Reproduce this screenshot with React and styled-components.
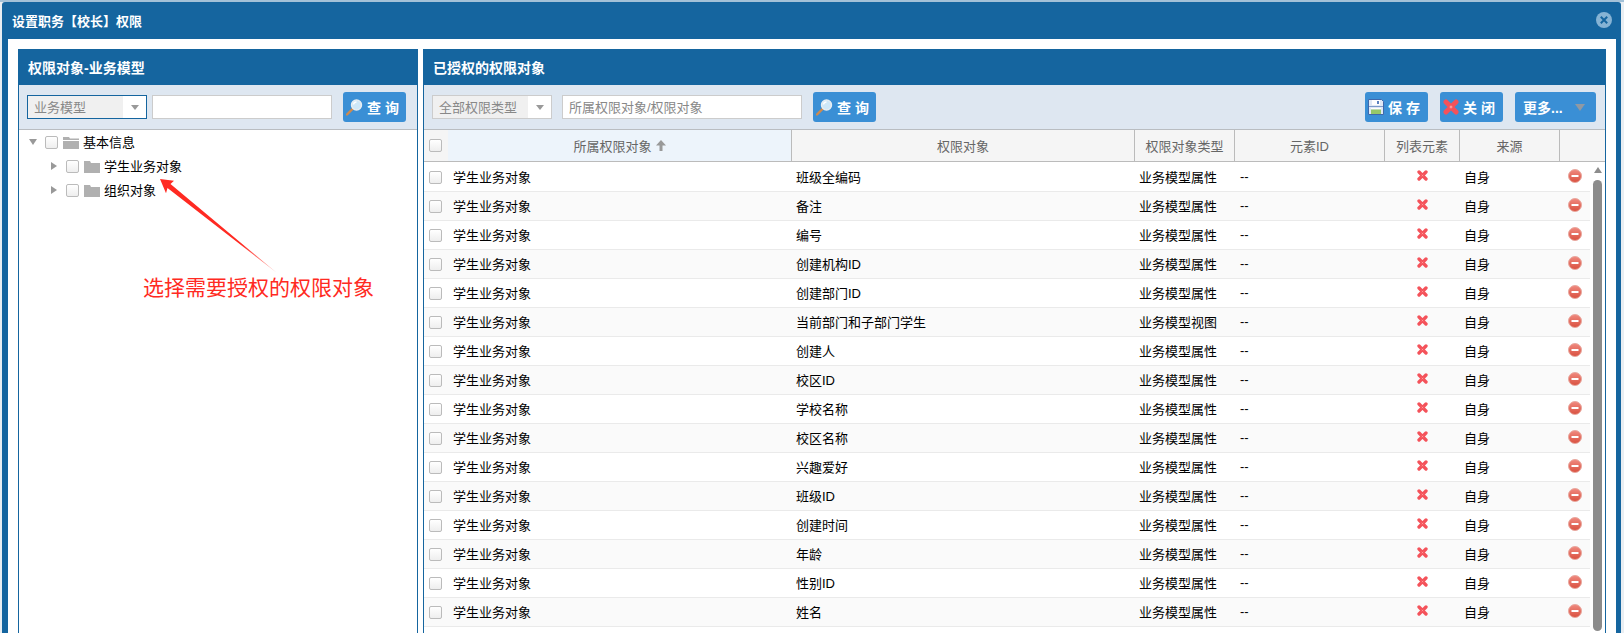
import React from 'react'
import styled, { createGlobalStyle } from 'styled-components'

const GlobalStyle = createGlobalStyle`
  html, body {
    margin: 0;
    padding: 0;
    height: 633px;
    overflow: hidden;
    background: #e9eef2;
  }
  body {
    font-family: "Liberation Sans", "Noto Sans CJK SC", sans-serif;
    font-size: 13px;
    color: #000;
  }
  * { box-sizing: border-box; }
`

const Page = styled.div`
  height: 633px;
  padding: 2px 3px 0 2px;
  background: linear-gradient(#a3c1d8 0, #a3c1d8 2px, #e9eef2 2px);
  overflow: hidden;
`

const Dialog = styled.div`
  height: 631px;
  display: flex;
  flex-direction: column;
  background: #15659f;
  border-radius: 3px 3px 0 0;
  padding: 0 5px 0 6px;
`

const DialogTitle = styled.div`
  height: 37px;
  flex: none;
  display: flex;
  align-items: center;
  padding-left: 4px;
  color: #fff;
  font-weight: bold;
  position: relative;
`

const CloseWrap = styled.span`
  position: absolute;
  right: 4px;
  top: 10px;
  width: 16px;
  height: 16px;
  display: block;
`

const DialogBody = styled.div`
  flex: 1;
  min-height: 0;
  background: #fff;
  padding: 10px 10px 0;
  display: flex;
  gap: 5px;
  position: relative;
`

const Panel = styled.section`
  width: ${(props) => props.$width || 'auto'};
  flex: ${(props) => (props.$width ? 'none' : '1')};
  min-width: 0;
  display: flex;
  flex-direction: column;
  border: 1px solid #15659f;
  border-bottom: 0;
`

const PanelHeader = styled.div`
  height: 36px;
  flex: none;
  margin-top: -1px;
  padding: 0 0 0 9px;
  display: flex;
  align-items: center;
  background: #15659f;
  color: #fff;
  font-size: 14px;
  font-weight: bold;
`

const Toolbar = styled.div`
  height: 45px;
  flex: none;
  display: flex;
  align-items: center;
  padding: 0 9px 0 8px;
  background: #dee7f1;
  border-bottom: 1px solid #b9bdc1;
`

const SelectBox = styled.div`
  width: 120px;
  height: 24px;
  flex: none;
  display: flex;
  background: #fff;
  border: 1px solid ${(props) => (props.$focused ? '#15659f' : '#ccc')};
  color: #888;
`

const SelectText = styled.div`
  flex: 1;
  background: #f0f0f0;
  padding-left: 6px;
  line-height: 23px;
  white-space: nowrap;
`

const SelectArrow = styled.div`
  width: 23px;
  display: flex;
  align-items: center;
  justify-content: center;
  &::after {
    content: '';
    border-left: 4.5px solid transparent;
    border-right: 4.5px solid transparent;
    border-top: 5px solid #999;
  }
`

const SearchInput = styled.input`
  width: ${(props) => props.$width}px;
  height: 24px;
  flex: none;
  margin-left: ${(props) => props.$gap}px;
  padding: 0 6px;
  border: 1px solid #ccc;
  background: #fff;
  outline: none;
  font: inherit;
  color: #333;
  &::placeholder { color: #888; opacity: 1; }
`

const Button = styled.button`
  width: ${(props) => props.$width || 63}px;
  height: 30px;
  flex: none;
  margin-left: ${(props) => props.$gap || 0}px;
  padding: 0 0 0 3px;
  display: flex;
  align-items: center;
  gap: 4px;
  border: 0;
  border-radius: 3px;
  background: #3a8fd5;
  color: #fff;
  font: inherit;
  font-size: 14px;
  font-weight: bold;
  white-space: pre;
`

const MoreButton = styled(Button)`
  padding: 0 11px 0 8px;
  justify-content: space-between;
  &::after {
    content: '';
    border-left: 5px solid transparent;
    border-right: 5px solid transparent;
    border-top: 7px solid #8f99a3;
  }
`

const Spacer = styled.div`
  flex: 1;
`

const Tree = styled.ul`
  list-style: none;
  margin: 0;
  padding: 0;
`

const TreeRow = styled.li`
  height: 24px;
  display: flex;
  align-items: center;
  padding-left: ${(props) => (props.$child ? 32 : 10)}px;
`

const TreeLabel = styled.span`
  margin-top: -2px;
`

const Caret = styled.span`
  width: 0;
  height: 0;
  flex: none;
  margin-right: ${(props) => (props.$open ? 8 : 9)}px;
  ${(props) =>
    props.$open
      ? `border-left: 4.5px solid transparent;
         border-right: 4.5px solid transparent;
         border-top: 6px solid #999;`
      : `border-top: 4.5px solid transparent;
         border-bottom: 4.5px solid transparent;
         border-left: 6px solid #999;`}
`

const Check = styled.span`
  width: 13px;
  height: 13px;
  flex: none;
  display: block;
  border: 1px solid #bbb;
  border-radius: 2px;
  background: linear-gradient(#fff, #eee);
`

const FolderWrap = styled.span`
  width: 16px;
  height: 13px;
  flex: none;
  margin: 0 4px 0 5px;
  display: block;
`

const Grid = styled.div`
  display: flex;
  flex-direction: column;
  flex: 1;
  min-height: 0;
`

const HeadRow = styled.div`
  height: 32px;
  flex: none;
  display: grid;
  grid-template-columns: 24px 344px 343px 100px 150px 75px 100px 45px;
  background: #f5f5f5;
  border-bottom: 1px solid #bbb;
`

const HeadCell = styled.div`
  display: flex;
  align-items: center;
  justify-content: center;
  gap: 4px;
  color: #666;
  background: ${(props) => (props.$sorted ? '#edf4fb' : 'transparent')};
  border-right: ${(props) => (props.$last ? '0' : '1px solid #bbb')};
`

const CheckCell = styled.div`
  display: flex;
  align-items: center;
  padding-left: 5px;
`

const BodyWrap = styled.div`
  flex: 1;
  min-height: 0;
  display: flex;
  padding-top: 1px;
`

const Rows = styled.div`
  width: 1166px;
  flex: none;
`

const Row = styled.div`
  height: 29px;
  display: grid;
  grid-template-columns: 24px 343px 343px 100px 150px 75px 100px 31px;
  align-items: center;
  background: ${(props) => (props.$odd ? '#fafafa' : '#fff')};
  border-bottom: 1px solid #eaeaea;
`

const Cell = styled.div`
  padding-left: ${(props) => props.$pad ?? 5}px;
  margin-top: -2px;
  white-space: nowrap;
`

const IconCell = styled.div`
  display: flex;
  justify-content: center;
  padding-left: 2px;
  margin-top: -3px;
`

const MinusCell = styled(IconCell)`
  justify-content: flex-start;
  padding-left: 9px;
`

const ScrollTrack = styled.div`
  width: 15px;
  flex: none;
  padding: 4px 3px 0;
  display: flex;
  flex-direction: column;
  align-items: center;
`

const ScrollUp = styled.div`
  flex: none;
  border-left: 4.5px solid transparent;
  border-right: 4.5px solid transparent;
  border-bottom: 6px solid #8c8c8c;
`

const ScrollThumb = styled.div`
  width: 9px;
  height: 451px;
  flex: none;
  margin-top: 7px;
  background: #8c8c8c;
  border-radius: 5px;
`

const ArrowMark = styled.svg`
  position: absolute;
  left: 150px;
  top: 130px;
  width: 140px;
  height: 120px;
  pointer-events: none;
`

const Annotation = styled.div`
  position: absolute;
  left: 135px;
  top: 234px;
  font-size: 21px;
  line-height: 30px;
  color: #ff2a22;
  white-space: nowrap;
`

const Magnifier = () => (
  <svg width="17" height="17" viewBox="0 0 17 17">
    <path d="M1 15.5 L7 9.5" stroke="#d08a4c" strokeWidth="2.4" strokeLinecap="round" />
    <circle cx="10.5" cy="6" r="5" fill="#cfe8f8" stroke="#e8eef2" strokeWidth="1.4" />
    <path d="M7.5 5.5a3 3 0 0 1 3-2.5" stroke="#fff" strokeWidth="1.4" fill="none" />
  </svg>
)

const Floppy = () => (
  <svg width="16" height="16" viewBox="0 0 16 16">
    <path d="M0.5 0.5h13l2 2v13h-15z" fill="#dfe8f5" stroke="#3f68ab" />
    <rect x="4" y="1" width="8" height="5" fill="#fff" />
    <rect x="9" y="2" width="2" height="3" fill="#5b82c0" />
    <rect x="1" y="7" width="14" height="1" fill="#7d9bcb" />
    <rect x="3" y="9" width="10" height="1.5" fill="#fff" />
    <rect x="3" y="10.5" width="10" height="4.5" fill="#96c868" />
  </svg>
)

const Cross = ({ size = 13 }) => (
  <svg width={size} height={size} viewBox="0 0 13 13">
    <path d="M2.4 2.4 L10.6 10.6 M10.6 2.4 L2.4 10.6" stroke="#f4525a" strokeWidth="4" strokeLinecap="round" />
    <path d="M5.6 5.6 L7.4 7.4 M7.4 5.6 L5.6 7.4" stroke="#ff9a9a" strokeWidth="1" />
  </svg>
)

const MinusIcon = () => (
  <svg width="14" height="14" viewBox="0 0 14 14">
    <defs>
      <linearGradient id="minusFill" x1="0" y1="0" x2="0" y2="1">
        <stop offset="0" stopColor="#f08a80" />
        <stop offset="1" stopColor="#d9503f" />
      </linearGradient>
    </defs>
    <circle cx="7" cy="7" r="6.5" fill="url(#minusFill)" stroke="#e8a89f" />
    <rect x="3.5" y="6" width="7" height="2" fill="#fff" />
  </svg>
)

const DialogClose = () => (
  <CloseWrap>
    <svg width="16" height="16" viewBox="0 0 16 16">
      <circle cx="8" cy="8" r="8" fill="#86b3d4" />
      <path d="M4.8 4.8 L11.2 11.2 M11.2 4.8 L4.8 11.2" stroke="#15659f" strokeWidth="2" />
    </svg>
  </CloseWrap>
)

const Folder = ({ open }) => (
  <FolderWrap>
    <svg width="16" height="13" viewBox="0 0 16 13">
      {open ? (
        <>
          <path d="M0 1h6l1 1.5h9V4H0z" fill="#b0b0b0" />
          <path d="M0 5h16v8H0z" fill="#b0b0b0" />
        </>
      ) : (
        <path d="M0 1h6l1 2h9v10H0z" fill="#b0b0b0" />
      )}
    </svg>
  </FolderWrap>
)

const SortUp = () => (
  <svg width="10" height="11" viewBox="0 0 10 11">
    <path d="M5 0 L10 5.5 H6.5 V11 H3.5 V5.5 H0 Z" fill="#999" />
  </svg>
)

const objects = [
  ['班级全编码', '业务模型属性'],
  ['备注', '业务模型属性'],
  ['编号', '业务模型属性'],
  ['创建机构ID', '业务模型属性'],
  ['创建部门ID', '业务模型属性'],
  ['当前部门和子部门学生', '业务模型视图'],
  ['创建人', '业务模型属性'],
  ['校区ID', '业务模型属性'],
  ['学校名称', '业务模型属性'],
  ['校区名称', '业务模型属性'],
  ['兴趣爱好', '业务模型属性'],
  ['班级ID', '业务模型属性'],
  ['创建时间', '业务模型属性'],
  ['年龄', '业务模型属性'],
  ['性别ID', '业务模型属性'],
  ['姓名', '业务模型属性'],
]

const App = () => {
  return (
    <Page>
      <GlobalStyle />
      <Dialog>
        <DialogTitle>
          设置职务【校长】权限
          <DialogClose />
        </DialogTitle>
        <DialogBody>
          <Panel $width="400px">
            <PanelHeader>权限对象-业务模型</PanelHeader>
            <Toolbar>
              <SelectBox $focused>
                <SelectText>业务模型</SelectText>
                <SelectArrow />
              </SelectBox>
              <SearchInput $width={180} $gap={5} />
              <Button $gap={11}>
                <Magnifier />
                查 询
              </Button>
            </Toolbar>
            <Tree>
              <TreeRow>
                <Caret $open />
                <Check />
                <Folder open />
                <TreeLabel>基本信息</TreeLabel>
              </TreeRow>
              <TreeRow $child>
                <Caret />
                <Check />
                <Folder />
                <TreeLabel>学生业务对象</TreeLabel>
              </TreeRow>
              <TreeRow $child>
                <Caret />
                <Check />
                <Folder />
                <TreeLabel>组织对象</TreeLabel>
              </TreeRow>
            </Tree>
          </Panel>

          <Panel>
            <PanelHeader>已授权的权限对象</PanelHeader>
            <Toolbar>
              <SelectBox>
                <SelectText>全部权限类型</SelectText>
                <SelectArrow />
              </SelectBox>
              <SearchInput $width={240} $gap={10} placeholder="所属权限对象/权限对象" />
              <Button $gap={11}>
                <Magnifier />
                查 询
              </Button>
              <Spacer />
              <Button>
                <Floppy />
                保 存
              </Button>
              <Button $gap={12}>
                <Cross size={16} />
                关 闭
              </Button>
              <MoreButton $gap={12} $width={81}>
                更多...
              </MoreButton>
            </Toolbar>
            <Grid>
              <HeadRow>
                <CheckCell>
                  <Check />
                </CheckCell>
                <HeadCell $sorted>
                  所属权限对象
                  <SortUp />
                </HeadCell>
                <HeadCell>权限对象</HeadCell>
                <HeadCell>权限对象类型</HeadCell>
                <HeadCell>元素ID</HeadCell>
                <HeadCell>列表元素</HeadCell>
                <HeadCell>来源</HeadCell>
                <HeadCell $last />
              </HeadRow>
              <BodyWrap>
                <Rows>
                  {objects.map(([name, type], index) => (
                    <Row key={name} $odd={index % 2 === 1}>
                      <CheckCell>
                        <Check />
                      </CheckCell>
                      <Cell>学生业务对象</Cell>
                      <Cell>{name}</Cell>
                      <Cell>{type}</Cell>
                      <Cell $pad={6}>--</Cell>
                      <IconCell>
                        <Cross size={11} />
                      </IconCell>
                      <Cell>自身</Cell>
                      <MinusCell>
                        <MinusIcon />
                      </MinusCell>
                    </Row>
                  ))}
                </Rows>
                <ScrollTrack>
                  <ScrollUp />
                  <ScrollThumb />
                </ScrollTrack>
              </BodyWrap>
            </Grid>
          </Panel>

          <ArrowMark viewBox="0 0 140 120">
            <defs>
              <linearGradient id="arrowFade" x1="0" y1="0" x2="1" y2="1">
                <stop offset="0.7" stopColor="#ff2a22" />
                <stop offset="1" stopColor="#ffc4c0" />
              </linearGradient>
            </defs>
            <path d="M2 10 L16 11.7 L12.5 15 L119 104 L9.5 19 L8 24.3 Z" fill="url(#arrowFade)" />
          </ArrowMark>
          <Annotation>选择需要授权的权限对象</Annotation>
        </DialogBody>
      </Dialog>
    </Page>
  )
}

export default App
